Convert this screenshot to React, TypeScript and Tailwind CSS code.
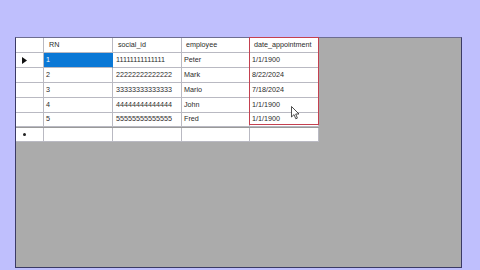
import React from 'react';

const rows = [
  { rn: '1', sid: '11111111111111', emp: 'Peter', date: '1/1/1900' },
  { rn: '2', sid: '22222222222222', emp: 'Mark', date: '8/22/2024' },
  { rn: '3', sid: '33333333333333', emp: 'Mario', date: '7/18/2024' },
  { rn: '4', sid: '44444444444444', emp: 'John', date: '1/1/1900' },
  { rn: '5', sid: '55555555555555', emp: 'Fred', date: '1/1/1900' },
];

const cell = 'flex items-center border-r border-b border-[#b9b9c2] pl-[2px] overflow-hidden whitespace-nowrap';

export default function App() {
  return (
    <div
      className="w-[480px] h-[270px] bg-[#bfbffd] pl-[15px] pt-[37px] overflow-hidden"
      style={{ fontFamily: '"Liberation Sans", "DejaVu Sans", sans-serif' }}
    >
      <div className="relative w-[447px] h-[231px] bg-[#ababab] border border-[#3b3b66] border-t-[#6d6d90]">
        <div className="flex flex-col w-[303px] text-[7.2px] text-[#2a2a2a] bg-white">
          {/* header */}
          <div className="flex h-[15px]">
            <div className={`${cell} w-[28px]`} />
            <div className={`${cell} w-[69px] pl-[5px]`}>RN</div>
            <div className={`${cell} w-[69px] pl-[5px]`}>social_id</div>
            <div className={`${cell} w-[68px] pl-[4px]`}>employee</div>
            <div className={`${cell} w-[69px] pl-[4px]`}>date_appointment</div>
          </div>
          {rows.map((r, i) => (
            <div key={r.rn} className={`flex h-[15px] ${i === 4 ? 'border-b border-[#9a9a9a]' : ''}`}>
              <div className={`${cell} w-[28px] pl-[6px]`}>
                {i === 0 && (
                  <svg width="5" height="7" viewBox="0 0 5 7">
                    <path d="M0 0 L5 3.5 L0 7 Z" fill="#111" />
                  </svg>
                )}
              </div>
              <div
                className={`${cell} w-[69px] ${i === 0 ? 'bg-[#0a78d6] text-white border-r-[#0a78d6]' : ''}`}
              >
                {r.rn}
              </div>
              <div className={`${cell} w-[69px] pl-[3px]`}>{r.sid}</div>
              <div className={`${cell} w-[68px]`}>{r.emp}</div>
              <div className={`${cell} w-[69px]`}>{r.date}</div>
            </div>
          ))}
          {/* new row */}
          <div className="flex h-[14px]">
            <div className={`${cell} w-[28px] pl-[7px]`}>
              <span className="block w-[3px] h-[3px] bg-[#222] rounded-full" />
            </div>
            <div className={`${cell} w-[69px]`} />
            <div className={`${cell} w-[69px]`} />
            <div className={`${cell} w-[68px]`} />
            <div className={`${cell} w-[69px]`} />
          </div>
        </div>

        {/* red highlight box */}
        <div className="absolute left-[233px] top-[-1px] w-[70px] h-[88px] border border-[#c44050]" />

        {/* mouse cursor */}
        <svg className="absolute left-[275px] top-[68px]" width="9" height="14" viewBox="0 0 9 14">
          <path
            d="M0.5 0.5 L0.5 11 L3 8.6 L4.8 12.8 L6.4 12.1 L4.7 8 L8 8 Z"
            fill="#fff"
            stroke="#222"
            strokeWidth="0.8"
            strokeLinejoin="round"
          />
        </svg>
      </div>
    </div>
  );
}
